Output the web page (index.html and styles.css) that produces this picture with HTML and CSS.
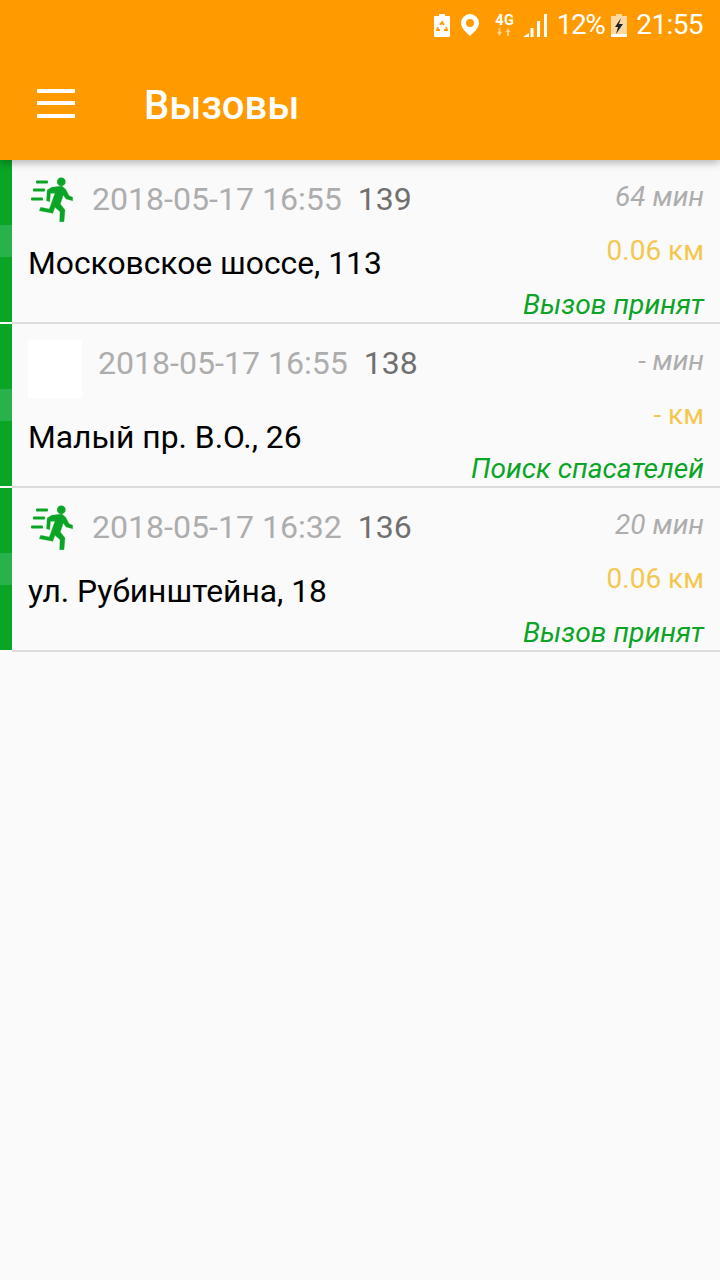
FILE: index.html
```html
<!DOCTYPE html>
<html lang="ru">
<head>
<meta charset="utf-8">
<title>Вызовы</title>
<link rel="stylesheet" href="styles.css">
</head>
<body>
<header class="appbar">
  <div class="status">
    <svg class="st-batsave" viewBox="0 0 16 23" width="16" height="23"><path fill="#fff" d="M5 0h6v2h4a1 1 0 0 1 1 1v19a1 1 0 0 1-1 1H1a1 1 0 0 1-1-1V3a1 1 0 0 1 1-1h4z"/><path fill="none" stroke="#ff9b00" stroke-width="1.800" d="M6 11l2-3 2 3M12 13l1 3H10M4 13l-1 3h3"/></svg>
    <svg class="st-pin" viewBox="0 0 18 22" width="18" height="22"><path fill="#fff" fill-rule="evenodd" d="M9 0a9 9 0 0 1 9 9c0 5-5 9-9 13C5 18 0 14 0 9a9 9 0 0 1 9-9zm0 5a4 4 0 1 0 0 8 4 4 0 0 0 0-8z"/></svg>
    <span class="st-net"><span class="st-4g">4G</span><svg viewBox="0 0 16 8" width="16" height="8"><path fill="#ffd08a" d="M2.500 8L0 4h1.500V0h2v4H5zM11 0l2.500 4H12v4h-2V4H8.500z"/></svg></span>
    <svg class="st-signal" viewBox="0 0 24 23" width="24" height="23"><path fill="#fff" d="M0 23l6-4v4zM7.500 14h3v9h-3zM14 7h3v16h-3zM21 0h3v23h-3z"/></svg>
    <span class="st-pct">12%</span>
    <svg class="st-bat" viewBox="0 0 16 23" width="16" height="23"><path fill="#ffd9a0" d="M5 0h6v2h5v21H0V2h5z"/><path fill="#fff" d="M0 20h16v3H0z"/><path fill="#222" d="M10 4L4 13h3l-2 7 7-10H8z"/></svg>
    <span class="st-time">21:55</span>
  </div>
  <div class="toolbar">
    <div class="burger"><i></i><i></i><i></i></div>
    <h1 class="title">Вызовы</h1>
  </div>
</header>
<main class="list">
  <article class="row">
    <div class="stripe"></div>
    <div class="body">
      <div class="main-col">
        <div class="head">
          <svg class="runner" viewBox="0 0 42 46" width="42" height="46"><use href="#run"/></svg>
          <span class="date">2018-05-17 16:55</span><span class="num">139</span>
        </div>
        <div class="addr">Московское шоссе, 113</div>
      </div>
      <div class="side-col">
        <div class="mins">64 мин</div>
        <div class="dist">0.06 км</div>
        <div class="state">Вызов принят</div>
      </div>
    </div>
  </article>
  <article class="row">
    <div class="stripe"></div>
    <div class="body">
      <div class="main-col">
        <div class="head">
          <div class="blank"></div>
          <span class="date">2018-05-17 16:55</span><span class="num">138</span>
        </div>
        <div class="addr">Малый пр. В.О., 26</div>
      </div>
      <div class="side-col">
        <div class="mins">- мин</div>
        <div class="dist">- км</div>
        <div class="state">Поиск спасателей</div>
      </div>
    </div>
  </article>
  <article class="row">
    <div class="stripe"></div>
    <div class="body">
      <div class="main-col">
        <div class="head">
          <svg class="runner" viewBox="0 0 42 46" width="42" height="46"><use href="#run"/></svg>
          <span class="date">2018-05-17 16:32</span><span class="num">136</span>
        </div>
        <div class="addr">ул. Рубинштейна, 18</div>
      </div>
      <div class="side-col">
        <div class="mins">20 мин</div>
        <div class="dist">0.06 км</div>
        <div class="state">Вызов принят</div>
      </div>
    </div>
  </article>
</main>
<svg class="defs" width="0" height="0">
  <defs>
    <g id="run" fill="#0aa527">
      <circle cx="30.300" cy="4.700" r="4.300"/>
      <path stroke="#0aa527" stroke-width=".3" stroke-linejoin="round" d="M20.700 10.300L30.700 9L34.700 12.300L38 18.700L41.700 20.300V23.700L35 22L32.300 18L29.300 27L34 33L33 44.700H28.700L29 34.700L24 30.300L21.700 36.300L8.300 33.700L9.700 30.300L18.300 32L24 16.300H19.500L18.700 24.700L15.500 23.700L16.200 13Z"/>
      <rect x="5" y="3.500" width="12" height="3" rx="1"/>
      <rect x="2" y="11.500" width="12" height="3" rx="1"/>
      <rect x="0" y="20.500" width="12" height="3" rx="1"/>
    </g>
  </defs>
</svg>
</body>
</html>
```
FILE: styles.css
```css
* { box-sizing: border-box; }
html, body { margin: 0; padding: 0; }
body {
  width: 720px;
  height: 1280px;
  background: #fafafa;
  font-family: Roboto, "Noto Sans", sans-serif;
  overflow: hidden;
}
.appbar {
  height: 160px;
  background: #ff9b00;
  color: #fff;
  box-shadow: 0 3px 8px rgba(0,0,0,.28);
  position: relative;
  z-index: 2;
}
.status {
  height: 50px;
  display: flex;
  align-items: center;
  justify-content: flex-end;
  padding: 0 17px 0 0;
}
.st-batsave { margin-right: 11px; }
.st-pin { margin-right: 16px; }
.st-net { display: flex; flex-direction: column; align-items: center; width: 20px; margin-right: 8px; }
.st-4g { font-size: 14.500px; font-weight: 700; line-height: 14px; letter-spacing: .5px; }
.st-signal { margin-right: 10px; }
.st-pct { font-size: 28px; letter-spacing: -1.500px; margin-right: 7px; line-height: 32px; }
.st-bat { margin-right: 9px; }
.st-time { font-size: 28px; letter-spacing: -.6px; line-height: 32px; }
.toolbar {
  height: 110px;
  display: flex;
  align-items: center;
  padding: 2px 0 0 37px;
}
.burger { width: 38px; display: flex; flex-direction: column; gap: 8.500px; margin: 0 69px 6px 0; }
.burger i { display: block; height: 4px; background: #fff; }
.title { margin: 0; font-size: 40px; font-weight: 500; line-height: 44px; }
.row { height: 164px; display: flex; }
.stripe {
  width: 12px;
  height: 162px;
  background: linear-gradient(#0aa527 0 65px, #28b24b 65px 97px, #0aa527 97px);
}
.body {
  flex: 1;
  display: flex;
  justify-content: space-between;
  padding: 16px 16px 0 16px;
  border-bottom: 2px solid #dcdcdc;
}
.head { display: flex; align-items: flex-start; min-height: 48px; }
.runner { margin: 1px 19px 0 3px; display: block; }
.blank { width: 54px; height: 58px; background: #fff; margin-right: 16px; }
.date { font-size: 32.100px; line-height: 38px; margin: 4px 16px 0 0; color: #adadad; }
.num { font-size: 32px; line-height: 38px; margin-top: 4px; color: #707070; }
.addr { font-size: 31.800px; color: #000; line-height: 40px; margin-top: 19px; }
.side-col { display: flex; flex-direction: column; align-items: flex-end; margin-top: -16px; }
.mins { font-size: 28px; font-style: italic; color: #adadad; line-height: 32px; margin-top: 21px; }
.dist { font-size: 28px; color: #f4c84f; line-height: 32px; margin-top: 22px; }
.state { font-size: 28.150px; font-style: italic; color: #0aa527; line-height: 32px; margin-top: 22px; }
.defs { position: absolute; }
```
